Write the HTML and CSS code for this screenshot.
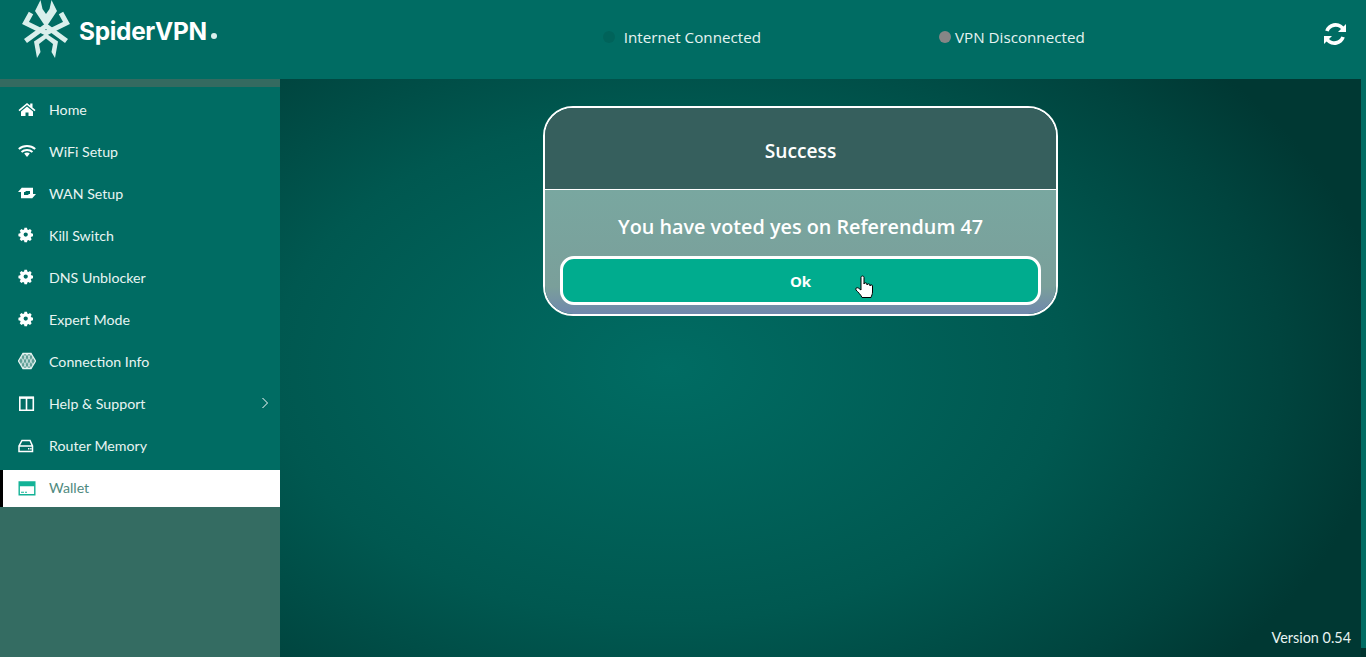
FILE: index.html
```html
<!DOCTYPE html>
<html lang="en">
<head>
  <meta charset="UTF-8">
  <meta name="viewport" content="width=device-width,initial-scale=1">
  <title>SpiderVPN</title>
  <link rel="stylesheet" href="styles.css">
</head>
<body>
  <header class="topbar">
    <div class="brand">
      <svg class="brand-mark" viewBox="0 0 48 60" width="48" height="60">
        <g fill="none" stroke="#d9efec" stroke-width="5">
          <path d="M9 13 3.500 23 24 33 44.500 23 39 13"/>
          <path d="M3.500 41 24 26 44.500 41"/>
        </g>
        <g fill="#d9efec">
          <path d="M18.500 0 20.500 9 24 14 27.500 9 29.500 0 35 11 27 23 24 27 21 23 13 11z"/>
          <path d="M24 33.500 36 41.500 33 58 29.500 52 31 44 24 38.500 17 44 18.500 52 15 58 12 41.500z"/>
        </g>
      </svg>
      <span class="brand-name">SpiderVPN</span><span class="brand-dot"></span>
    </div>
    <div class="status status-net"><span class="dot dot-net"></span>Internet Connected</div>
    <div class="status status-vpn"><span class="dot dot-vpn"></span>VPN Disconnected</div>
    <svg class="refresh" viewBox="0 0 24 24" width="24" height="24">
      <path fill="#fff" d="M23 2v8h-8l3-3a7.500 7.500 0 0 0-12.300 2.600L2.200 8.400A11 11 0 0 1 20.500 4.500z"/>
      <path fill="#fff" d="M1 22v-8h8l-3 3a7.500 7.500 0 0 0 12.300-2.600l3.500 1.200A11 11 0 0 1 3.500 19.500z"/>
    </svg>
  </header>

  <div class="layout">
    <nav class="sidebar">
      <ul class="menu">
        <li class="menu-item">
          <svg class="icon" viewBox="0 0 18 18"><path fill="#fff" d="M9 3 .5 10l1 1.200L9 5l7.500 6.200 1-1.200-3-2.500V3.500h-2.300v2zM3 11.500 9 6.500l6 5V16h-4.500v-3.500h-3V16H3z"/></svg>
          Home
        </li>
        <li class="menu-item">
          <svg class="icon" viewBox="0 0 18 18"><path fill="none" stroke="#fff" stroke-width="2" d="M.8 7c4.600-4 11.800-4 16.400 0M3.500 10c3.100-2.700 7.900-2.700 11 0"/><path fill="#fff" d="M9 10.500c1.100 0 2.100.4 2.800 1L9 15l-2.800-3.500c.7-.6 1.700-1 2.800-1z"/></svg>
          WiFi Setup
        </li>
        <li class="menu-item">
          <svg class="icon" viewBox="0 0 18 18"><path fill="#fff" d="M4 3.500 8 8H6v3h6l2.500 3.200H3V8H0zM14 14.500 10 10h2V7H6L3.500 3.800H15V10h3z"/></svg>
          WAN Setup
        </li>
        <li class="menu-item">
          <svg class="icon" viewBox="0 0 21 21"><path fill="#fff" fill-rule="evenodd" d="M7.500 2h3l.4 2 1.300.6 1.800-1.100 2 2-1.100 1.800.6 1.300 2 .4v3l-2 .4-.6 1.300 1.100 1.800-2 2-1.800-1.100-1.300.6-.4 2h-3l-.4-2-1.300-.6-1.800 1.100-2-2 1.100-1.800-.6-1.300-2-.4v-3l2-.4.6-1.300-1.100-1.800 2-2 1.800 1.100 1.300-.6zM9 7.500a2.500 2.500 0 1 0 0 5 2.500 2.500 0 0 0 0-5z"/></svg>
          Kill Switch
        </li>
        <li class="menu-item">
          <svg class="icon" viewBox="0 0 21 21"><path fill="#fff" fill-rule="evenodd" d="M7.500 2h3l.4 2 1.300.6 1.800-1.100 2 2-1.100 1.800.6 1.300 2 .4v3l-2 .4-.6 1.300 1.100 1.800-2 2-1.800-1.100-1.300.6-.4 2h-3l-.4-2-1.300-.6-1.800 1.100-2-2 1.100-1.800-.6-1.300-2-.4v-3l2-.4.6-1.300-1.100-1.800 2-2 1.800 1.100 1.300-.6zM9 7.500a2.500 2.500 0 1 0 0 5 2.500 2.500 0 0 0 0-5z"/></svg>
          DNS Unblocker
        </li>
        <li class="menu-item">
          <svg class="icon" viewBox="0 0 21 21"><path fill="#fff" fill-rule="evenodd" d="M7.500 2h3l.4 2 1.300.6 1.800-1.100 2 2-1.100 1.800.6 1.300 2 .4v3l-2 .4-.6 1.300 1.100 1.800-2 2-1.800-1.100-1.300.6-.4 2h-3l-.4-2-1.300-.6-1.800 1.100-2-2 1.100-1.800-.6-1.300-2-.4v-3l2-.4.6-1.300-1.100-1.800 2-2 1.800 1.100 1.300-.6zM9 7.500a2.500 2.500 0 1 0 0 5 2.500 2.500 0 0 0 0-5z"/></svg>
          Expert Mode
        </li>
        <li class="menu-item">
          <svg class="icon" viewBox="0 0 18 18"><path fill="#5f9f96" stroke="#e6f3f1" stroke-width="1.300" d="M5 1.500h8L17.500 9 13 16.500H5L.5 9z"/><path fill="none" stroke="#e6f3f1" stroke-width=".8" d="M5 1.500 13 16.500M13 1.500 5 16.500M9 1.500 3 13M9 1.500 15 13M9 16.500 3 5M9 16.500 15 5"/></svg>
          Connection Info
        </li>
        <li class="menu-item">
          <svg class="icon" viewBox="0 0 18 18"><path fill="none" stroke="#fff" stroke-width="1.600" d="M1.800 3.500h13.500v12.700H1.800zM8.500 3.500v12.700"/><path fill="#fff" d="M1 2.500h15v2.300H1z"/></svg>
          Help &amp; Support
          <svg class="chevron" viewBox="0 0 8 12" width="8" height="12"><path fill="none" stroke="#fff" stroke-width="1" d="M1.500 1l5 5-5 5"/></svg>
        </li>
        <li class="menu-item">
          <svg class="icon" viewBox="0 0 18 18"><path fill="none" stroke="#fff" stroke-width="1.500" d="M4 4.500h8l2.500 5.500v5.500H1V10zM1 10h13.500"/><path fill="#fff" d="M10 12h1.400v1.400H10zM12.200 12h1.400v1.400h-1.400z"/></svg>
          Router Memory
        </li>
        <li class="menu-item menu-item-active">
          <svg class="icon" viewBox="0 0 18 18"><path fill="none" stroke="#12b296" stroke-width="1.400" d="M1.200 3h15.600v12.800H1.200z"/><path fill="#12b296" d="M1.200 3h15.600v4.200H1.200zM3 12.800h3v1H3zM7 12.800h2v1H7z"/></svg>
          Wallet
        </li>
      </ul>
    </nav>

    <main class="content">
      <div class="dialog">
        <div class="dialog-head">Success</div>
        <div class="dialog-body">
          <p class="dialog-text">You have voted yes on Referendum 47</p>
          <button class="dialog-btn" type="button">Ok</button>
          <svg class="cursor" viewBox="0 0 18 24" width="18" height="24"><path fill="#fff" stroke="#000" stroke-width="1" stroke-linejoin="round" d="M6 2.500c0-2 3-2 3 0V9c0-1.500 3-1.500 3 0v1c0-1.500 3-1.500 3 0v1c0-1.500 2.500-1.500 2.500 0v6c0 2.500-1 3.500-1.500 5.500H7C6 20 3 17 1 15c-1-1.500.8-3 2.300-2L6 15z"/></svg>
        </div>
      </div>
      <div class="version">Version 0.54</div>
    </main>
    <div class="edge"></div>
  </div>
</body>
</html>
```

FILE: styles.css
```css
* { box-sizing: border-box; }
html, body { height: 100%; }
body {
  margin: 0;
  height: 657px;
  overflow: hidden;
  background: #006c63;
  color: #fff;
  font-family: "Lato", "Open Sans", sans-serif;
}

/* top bar */
.topbar {
  height: 79px;
  display: flex;
  background: #006c63;
}
.brand {
  display: flex;
  align-items: center;
  height: 60px;
  margin-left: 22px;
}
.brand-mark { display: block; }
.brand-name {
  margin-left: 9px;
  margin-top: 1px;
  font-family: "Inter", sans-serif;
  font-weight: 700;
  font-size: 24.4px;
  letter-spacing: -0.3px;
}
.brand-dot {
  width: 6px;
  height: 6px;
  margin: 11px 0 0 4px;
  border-radius: 50%;
  background: #d9efec;
}
.status {
  display: flex;
  align-items: center;
  height: 20px;
  margin-top: 27px;
  font-family: "Open Sans", sans-serif;
  font-size: 15.2px;
  color: #e6f3f1;
}
.status-net { margin-left: 386px; }
.status-vpn { margin-left: 178px; }
.dot {
  width: 12px;
  height: 12px;
  border-radius: 50%;
}
.dot-net { background: #00635a; margin-right: 9px; }
.dot-vpn { background: #868686; margin-right: 4px; }
.refresh {
  margin-left: auto;
  margin-right: 19px;
  margin-top: 22px;
}

/* sidebar + content */
.layout {
  display: flex;
  height: 578px;
}
.sidebar {
  width: 280px;
  flex-shrink: 0;
  background: #346c62;
  border-top: 8px solid #346a60;
}
.menu {
  list-style: none;
  margin: 0;
  padding: 1px 0 0;
  background: #006c63;
}
.menu-item {
  display: flex;
  align-items: center;
  height: 42px;
  padding-left: 18px;
  font-size: 14.2px;
  position: relative;
  color: #e8f4f2;
}
.icon {
  width: 18px;
  height: 18px;
  margin-right: 13px;
  flex-shrink: 0;
}
.chevron { position: absolute; right: 11px; top: 15px; }
.menu-item-active {
  height: 37px;
  margin-top: 4px;
  padding-bottom: 2px;
  background: #fff;
  color: #4f8a80;
  border-left: 3px solid #000;
  padding-left: 15px;
}

.content {
  width: 1081px;
  position: relative;
  display: flex;
  justify-content: center;
  align-items: flex-start;
  background: radial-gradient(ellipse 720px 460px at 36% 50%, #006c63 0%, #005850 55%, #00443e 85%, #003833 100%);
  background-color: #003632;
}
.edge {
  width: 5px;
  background: linear-gradient(#006c63 569px, #00332e 569px);
}
.dialog {
  width: 515px;
  height: 210px;
  margin-top: 27px;
  margin-right: 40px;
  border: 2px solid #fff;
  border-radius: 30px;
  overflow: hidden;
  display: flex;
  flex-direction: column;
  font-family: "Open Sans", sans-serif;
}
.dialog-head {
  height: 82px;
  flex-shrink: 0;
  padding-top: 4px;
  display: flex;
  align-items: center;
  justify-content: center;
  background: #365f5d;
  border-bottom: 1px solid #fff;
  font-size: 19.2px;
  font-weight: 600;
}
.dialog-body {
  flex: 1;
  position: relative;
  padding: 0 15px;
  background: linear-gradient(#79a7a0 0%, #7a9f9a 78%, #7088ad 100%);
}
.dialog-text {
  margin: 23px 0 0;
  text-align: center;
  font-size: 19.8px;
  font-weight: 600;
}
.dialog-btn {
  display: block;
  width: 100%;
  height: 49px;
  margin-top: 16px;
  background: #00ac8e;
  border: 3px solid #fff;
  border-radius: 14px;
  color: #fff;
  font-family: inherit;
  font-size: 15px;
  font-weight: 700;
}
.cursor { position: absolute; left: 310px; top: 85px; }
.version {
  position: absolute;
  right: 10px;
  bottom: 11px;
  font-size: 14.4px;
  color: #e8f4f2;
}
```
